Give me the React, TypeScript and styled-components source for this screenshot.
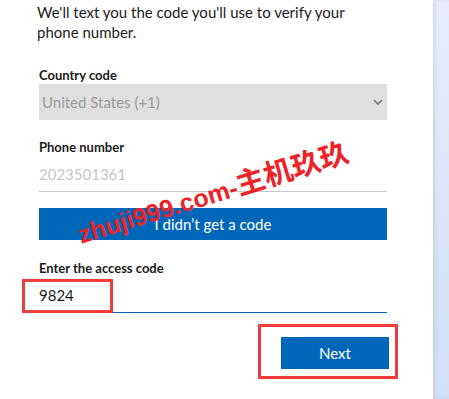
import React from "react"
import styled, { createGlobalStyle } from "styled-components"

const GlobalStyle = createGlobalStyle`
  html, body {
    margin: 0;
    padding: 0;
    background: #ffffff;
  }
  body {
    font-family: Lato, "Liberation Sans", Arial, sans-serif;
    color: #1b1b1b;
  }
`

const Page = styled.div`
  position: relative;
  display: flex;
  width: 449px;
  height: 399px;
  overflow: hidden;
  background: #ffffff;
`

const Main = styled.div`
  flex: 1;
  padding: 2px 0 0 39px;
`

const Column = styled.div`
  display: flex;
  flex-direction: column;
  width: 348px;
`

const SidePanel = styled.div`
  width: 16px;
  background: linear-gradient(to bottom, #e7ecfa, #d0e0f6);
  box-shadow: inset 2px 0 3px rgba(60, 80, 120, 0.12);
`

const Intro = styled.p`
  margin: 0 0 0 -2px;
  font-size: 15px;
  line-height: 20px;
  color: #1b1b1b;
`

const Label = styled.div<{ $top: number }>`
  margin-top: ${(p) => p.$top}px;
  font-size: 13px;
  line-height: 17px;
  font-weight: 700;
  color: #1b1b1b;
`

const Select = styled.div`
  display: flex;
  align-items: center;
  justify-content: space-between;
  height: 36px;
  padding: 0 4px 0 3px;
  background: #dfdfdf;
  font-size: 15px;
  color: #9b9b9b;
`

const Chevron = styled.svg`
  width: 10px;
  height: 6px;
`

const Field = styled.div<{ $active?: boolean; $muted?: boolean }>`
  position: relative;
  display: flex;
  align-items: center;
  height: 35px;
  border-bottom: 1px solid ${(p) => (p.$active ? "#0067b8" : "#c8c8c8")};
  font-size: 15px;
  color: ${(p) => (p.$muted ? "#c6c6c6" : "#1b1b1b")};
`

const WideButton = styled.div`
  display: flex;
  align-items: center;
  justify-content: center;
  height: 32px;
  margin-top: 16px;
  background: #0067b8;
  color: #ffffff;
  font-size: 15px;
`

const Actions = styled.div`
  display: flex;
  justify-content: flex-end;
  margin: 24px -2px 0 0;
`

const NextButton = styled.div`
  position: relative;
  display: flex;
  align-items: center;
  justify-content: center;
  width: 108px;
  height: 32px;
  background: #0067b8;
  color: #ffffff;
  font-size: 15px;
`

const Highlight = styled.div<{ $l: number; $t: number; $w: number; $h: number }>`
  position: absolute;
  left: ${(p) => p.$l}px;
  top: ${(p) => p.$t}px;
  width: ${(p) => p.$w}px;
  height: ${(p) => p.$h}px;
  box-sizing: border-box;
  border: 3px solid #f23b3b;
  pointer-events: none;
`

const Watermark = styled.div`
  position: absolute;
  left: 72px;
  top: 174px;
  transform: rotate(-17deg);
  transform-origin: center;
  white-space: nowrap;
  font-family: "Liberation Sans", sans-serif;
  font-size: 25px;
  font-weight: 700;
  line-height: 32px;
  color: #ec2329;
  pointer-events: none;
`

const WatermarkCjk = styled.span`
  font-family: "Noto Sans CJK SC", sans-serif;
  font-size: 29px;
  font-weight: 700;
`

export default function App() {
  return (
    <>
      <GlobalStyle />
      <Page>
        <Main>
          <Column>
            <Intro>
              We'll text you the code you'll use to verify your phone number.
            </Intro>

            <Label $top={25}>Country code</Label>
            <Select>
              <span>United States (+1)</span>
              <Chevron viewBox="0 0 10 6">
                <path d="M1 1l4 4 4-4" fill="none" stroke="#777" strokeWidth="1.6" />
              </Chevron>
            </Select>

            <Label $top={19}>Phone number</Label>
            <Field $muted>2023501361</Field>

            <WideButton>I didn’t get a code</WideButton>

            <Label $top={20}>Enter the access code</Label>
            <Field $active>
              9824
              <Highlight $l={-17} $t={2} $w={91} $h={34} />
            </Field>

            <Actions>
              <NextButton>
                Next
                <Highlight $l={-23} $t={-13} $w={140} $h={55} />
              </NextButton>
            </Actions>
          </Column>
        </Main>
        <SidePanel />
        <Watermark>
          zhuji999.com-<WatermarkCjk>主机玖玖</WatermarkCjk>
        </Watermark>
      </Page>
    </>
  )
}
